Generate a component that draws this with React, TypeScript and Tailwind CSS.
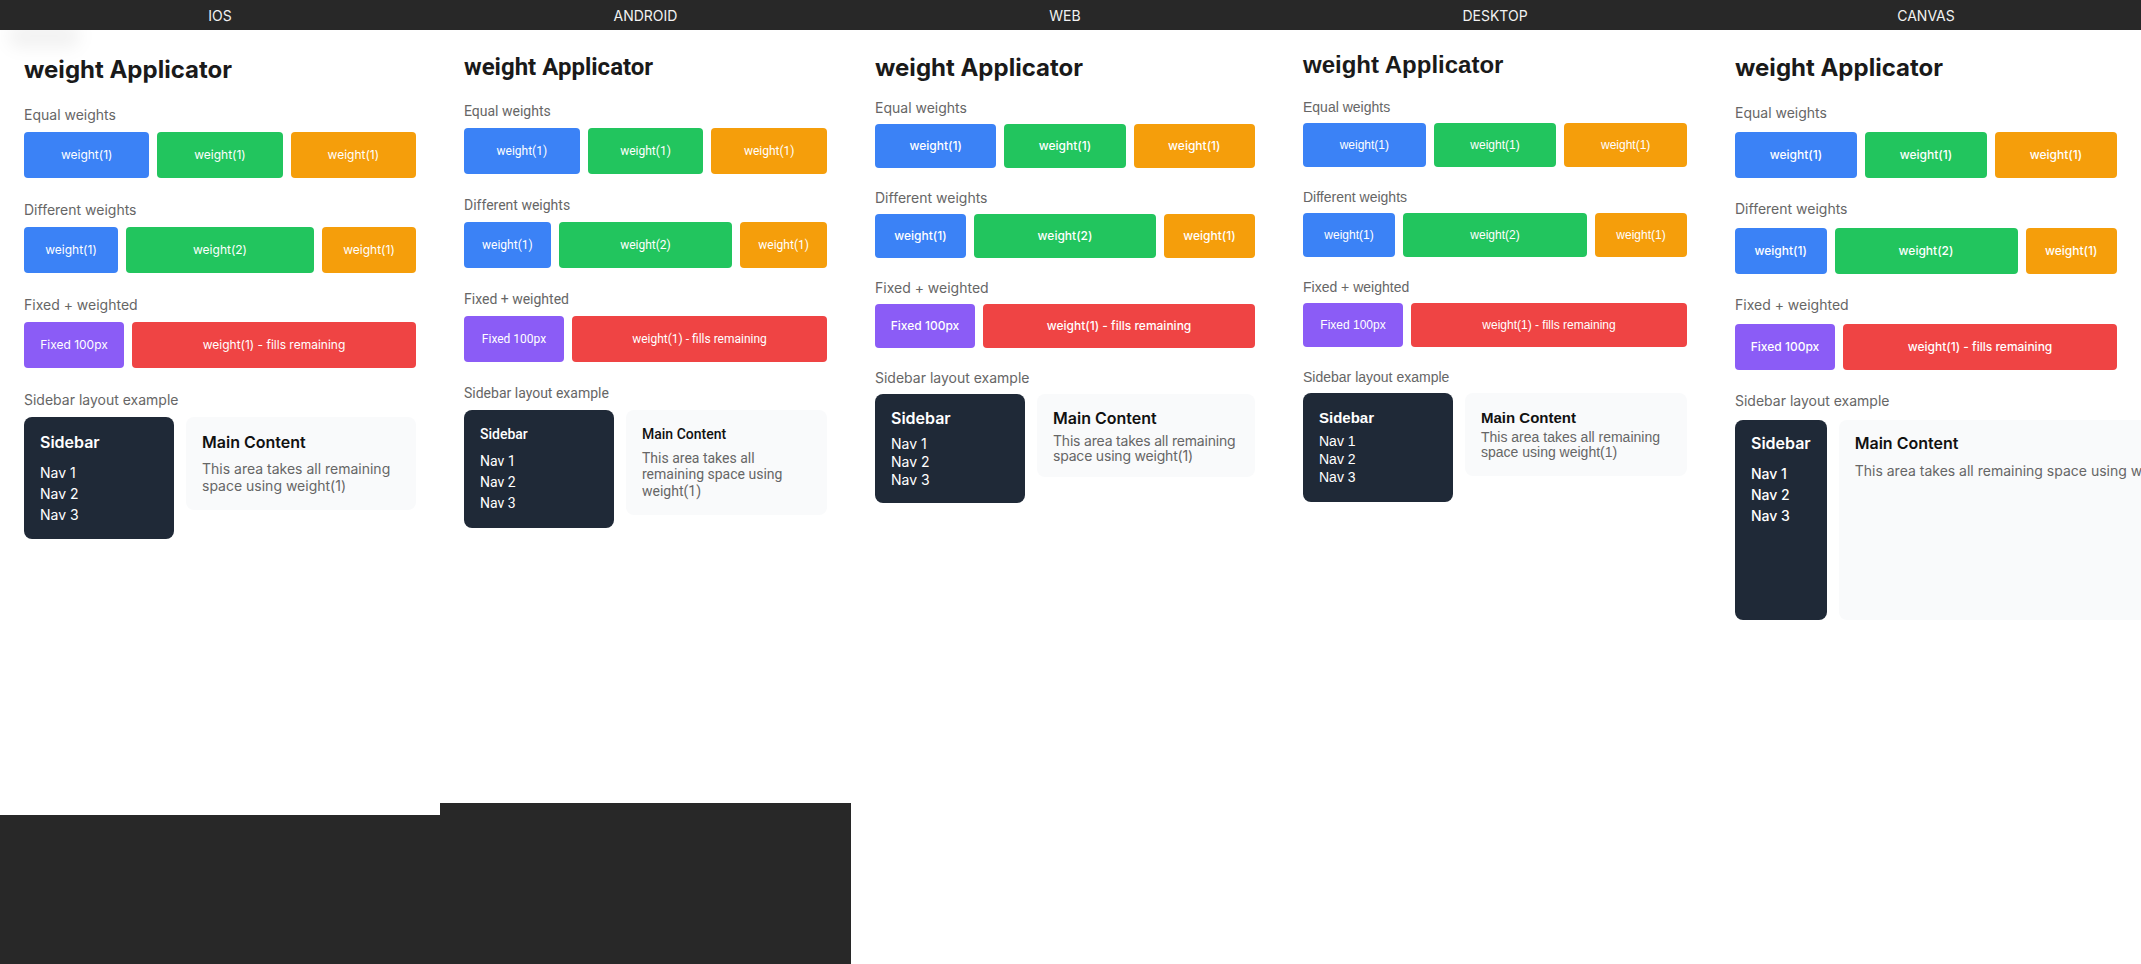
import React from "react"

type Cfg = {
    name: string
    col: string
    body: string
    title: string
    label: string
    gap: string
    box: string
    boxText: string
    sideRow: string
    sidebar: string
    sideTitle: string
    nav: string
    main: string
    mainTitle: string
    desc: string
    blob?: boolean
}

const PLATFORMS: Cfg[] = [
    {
        name: "IOS",
        col: "w-[440px]",
        body: "h-[785px] px-6 pt-[25px] font-['Inter',sans-serif]",
        title: "text-[24px] leading-[29px] font-bold text-[#1a1a1a] mb-[21px]",
        label: "text-[14px] leading-[20px] text-[#666666] mb-[7px]",
        gap: "mt-[22px]",
        box: "h-[46px] rounded",
        boxText: "text-[12px]",
        sideRow: "flex items-start gap-3",
        sidebar: "w-[150px] shrink-0 rounded-lg bg-[#1f2937] px-4 pt-4 pb-[14px]",
        sideTitle: "text-[16px] leading-[19px] font-semibold text-white mb-[10px]",
        nav: "text-[14px] leading-[21px] text-white",
        main: "flex-1 min-w-0 rounded-lg bg-[#f9fafb] p-4",
        mainTitle: "text-[16px] leading-[19px] font-semibold text-[#111111] mb-2",
        desc: "text-[14px] leading-[17px] text-[#666666]",
        blob: true,
    },
    {
        name: "ANDROID",
        col: "w-[411px]",
        body: "h-[773px] px-6 pt-[23px] font-['Roboto',sans-serif]",
        title: "text-[24px] leading-[28px] font-bold text-[#1a1a1a] mb-[20px]",
        label: "text-[14px] leading-[20px] text-[#666666] mb-[7px]",
        gap: "mt-[21px]",
        box: "h-[46px] rounded",
        boxText: "text-[12px]",
        sideRow: "flex items-start gap-3",
        sidebar: "w-[150px] shrink-0 rounded-lg bg-[#1f2937] px-4 pt-4 pb-[14px]",
        sideTitle: "text-[14px] leading-[17px] font-medium text-white mb-2",
        nav: "text-[14px] leading-[21px] text-white",
        main: "flex-1 min-w-0 rounded-lg bg-[#f9fafb] p-4",
        mainTitle: "text-[14px] leading-[17px] font-medium text-[#111111] mb-[7px]",
        desc: "text-[14px] leading-[16.4px] text-[#666666]",
    },
    {
        name: "WEB",
        col: "w-[428px]",
        body: "flex-1 px-6 pt-[23px] font-['Inter',sans-serif]",
        title: "text-[24px] leading-[29px] font-bold text-[#1a1a1a] mb-[16px]",
        label: "text-[14px] leading-[20px] text-[#666666] mb-[6px]",
        gap: "mt-[20px]",
        box: "h-[44px] rounded",
        boxText: "text-[12px] font-medium",
        sideRow: "flex items-start gap-3",
        sidebar: "w-[150px] shrink-0 rounded-lg bg-[#1f2937] px-4 pt-[15px] pb-[14px]",
        sideTitle: "text-[16px] leading-[19px] font-semibold text-white mb-[7px]",
        nav: "text-[14px] leading-[18px] text-white",
        main: "flex-1 min-w-0 rounded-lg bg-[#f9fafb] px-4 pt-[15px] pb-[14px]",
        mainTitle: "text-[16px] leading-[19px] font-semibold text-[#111111] mb-[5px]",
        desc: "text-[14px] leading-[15px] tracking-[-0.2px] text-[#666666]",
    },
    {
        name: "DESKTOP",
        col: "w-[432px]",
        body: "flex-1 px-6 pt-[21px] font-['Liberation_Sans',Arial,sans-serif]",
        title: "text-[24px] leading-[28px] font-bold text-[#1a1a1a] mb-[18px]",
        label: "text-[14px] leading-[20px] text-[#666666] mb-[6px]",
        gap: "mt-[20px]",
        box: "h-[44px] rounded",
        boxText: "text-[12px]",
        sideRow: "flex items-start gap-3",
        sidebar: "w-[150px] shrink-0 rounded-lg bg-[#1f2937] px-4 pt-[15px] pb-4",
        sideTitle: "text-[15px] leading-[19px] font-bold text-white mb-[5px]",
        nav: "text-[14px] leading-[18px] text-white",
        main: "flex-1 min-w-0 rounded-lg bg-[#f9fafb] px-4 pt-[15px] pb-4",
        mainTitle: "text-[15px] leading-[19px] font-bold text-[#111111] mb-[3px]",
        desc: "text-[14px] leading-[15px] text-[#666666]",
    },
    {
        name: "CANVAS",
        col: "flex-1 min-w-0",
        body: "flex-1 px-6 pt-[23px] font-['Inter',sans-serif]",
        title: "text-[24px] leading-[29px] font-bold text-[#1a1a1a] mb-[21px]",
        label: "text-[14px] leading-[20px] text-[#666666] mb-[9px]",
        gap: "mt-[21px]",
        box: "h-[46px] rounded",
        boxText: "text-[12px] font-medium",
        sideRow: "flex gap-3 h-[200px]",
        sidebar: "shrink-0 rounded-lg bg-[#1f2937] px-4 pt-[14px]",
        sideTitle: "text-[16px] leading-[19px] font-semibold text-white mb-[10px]",
        nav: "text-[14px] leading-[21px] font-medium text-white",
        main: "flex-1 rounded-lg bg-[#f9fafb] px-4 pt-[14px]",
        mainTitle: "text-[16px] leading-[19px] font-semibold text-[#111111] mb-[9px]",
        desc: "text-[14px] leading-[17px] text-[#666666] whitespace-nowrap",
    },
]

function Box({ cfg, color, className = "", children }: { cfg: Cfg; color: string; className?: string; children: React.ReactNode }) {
    return (
        <div className={`${cfg.box} ${color} ${className} flex items-center justify-center text-white ${cfg.boxText}`}>
            {children}
        </div>
    )
}

function Column({ cfg }: { cfg: Cfg }) {
    return (
        <div className={`${cfg.col} flex flex-col overflow-hidden`}>
            <div className="h-[30px] shrink-0 flex items-center justify-center text-[14px] text-[#f2f2f2] font-['Inter',sans-serif]">
                {cfg.name}
            </div>
            <div className={`${cfg.body} relative bg-white overflow-hidden`}>
                {cfg.blob && (
                    <div className="absolute left-[8px] top-[-6px] w-[72px] h-[24px] rounded-full bg-black/[0.05] blur-[8px]" />
                )}
                <h1 className={cfg.title}>weight Applicator</h1>

                <div>
                    <p className={cfg.label}>Equal weights</p>
                    <div className="flex gap-2">
                        <Box cfg={cfg} color="bg-[#3b82f6]" className="flex-1">weight(1)</Box>
                        <Box cfg={cfg} color="bg-[#22c55e]" className="flex-1">weight(1)</Box>
                        <Box cfg={cfg} color="bg-[#f59e0b]" className="flex-1">weight(1)</Box>
                    </div>
                </div>

                <div className={cfg.gap}>
                    <p className={cfg.label}>Different weights</p>
                    <div className="flex gap-2">
                        <Box cfg={cfg} color="bg-[#3b82f6]" className="flex-[1_1_0%]">weight(1)</Box>
                        <Box cfg={cfg} color="bg-[#22c55e]" className="flex-[2_1_0%]">weight(2)</Box>
                        <Box cfg={cfg} color="bg-[#f59e0b]" className="flex-[1_1_0%]">weight(1)</Box>
                    </div>
                </div>

                <div className={cfg.gap}>
                    <p className={cfg.label}>Fixed + weighted</p>
                    <div className="flex gap-2">
                        <Box cfg={cfg} color="bg-[#8b5cf6]" className="w-[100px] shrink-0">Fixed 100px</Box>
                        <Box cfg={cfg} color="bg-[#ef4444]" className="flex-1">weight(1) - fills remaining</Box>
                    </div>
                </div>

                <div className={cfg.gap}>
                    <p className={cfg.label}>Sidebar layout example</p>
                    <div className={cfg.sideRow}>
                        <div className={cfg.sidebar}>
                            <h3 className={cfg.sideTitle}>Sidebar</h3>
                            {["Nav 1", "Nav 2", "Nav 3"].map(n => (
                                <div key={n} className={cfg.nav}>{n}</div>
                            ))}
                        </div>
                        <div className={cfg.main}>
                            <h3 className={cfg.mainTitle}>Main Content</h3>
                            <p className={cfg.desc}>This area takes all remaining space using weight(1)</p>
                        </div>
                    </div>
                </div>
            </div>
        </div>
    )
}

export default function App() {
    return (
        <div className="w-[2141px] h-[964px] bg-[#282828] flex overflow-hidden">
            {PLATFORMS.map(p => (
                <Column key={p.name} cfg={p} />
            ))}
        </div>
    )
}
